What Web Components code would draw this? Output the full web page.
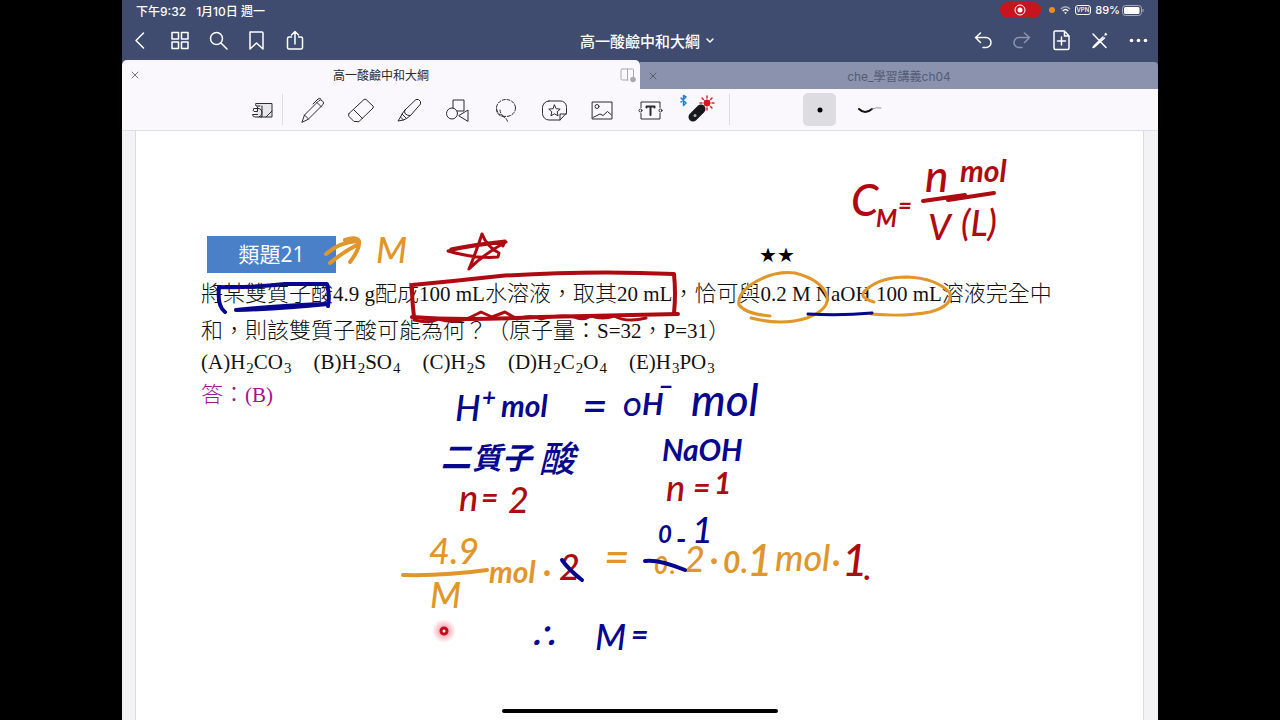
<!DOCTYPE html>
<html lang="zh-Hant">
<head>
<meta charset="utf-8">
<title>高一酸鹼中和大綱</title>
<style>
html, body { margin: 0; min-height: 100%; background: #000; }
body { font-family: Inter, "Noto Sans CJK TC", sans-serif; font-size: 12px; color: #222; }
</style>
</head>
<body>
<note-app>
  <status-bar slot="top"></status-bar>
  <nav-bar slot="top">高一酸鹼中和大綱</nav-bar>
  <tab-strip slot="top">
    <doc-tab active>高一酸鹼中和大綱</doc-tab>
    <doc-tab>che_學習講義ch04</doc-tab>
  </tab-strip>
  <tool-bar slot="top"></tool-bar>
  <note-page></note-page>
</note-app>

<script>
const ICONS = {
  back: '<path d="M13.500 5 6 12.500l7.500 7.500"/>',
  grid: '<path d="M4 4.500h6.500v6.500H4zM13.500 4.500H20v6.500h-6.500zM4 14h6.500v6.500H4zM13.500 14H20v6.500h-6.500z"/>',
  search: '<circle cx="10.500" cy="10.500" r="6"/><path d="m15 15 6 6"/>',
  bookmark: '<path d="M6 4h12a1 1 0 0 1 1 1v16l-6.500-6L6 21z"/>',
  share: '<path d="M9.500 9H7a1.500 1.500 0 0 0-1.500 1.500v9A1.500 1.500 0 0 0 7 21h12a1.500 1.500 0 0 0 1.500-1.500v-9A1.500 1.500 0 0 0 19 9h-2.500M13 16V3.500M9.500 7 13 3.500 16.500 7"/>',
  undo: '<path d="M10.500 5 5.500 9.500l5 5M5.500 9.500H16a4.500 4.500 0 0 1 0 10h-3"/>',
  redo: '<path d="m15.500 5 5 4.500-5 5M20.500 9.500H10a4.500 4.500 0 0 0 0 10h3"/>',
  addPage: '<path d="M7 3h9.500L21 8v12a1.500 1.500 0 0 1-1.500 1.500h-12A1.500 1.500 0 0 1 6 20V4.500A1.500 1.500 0 0 1 7 3zM16.500 3v5H21M13.500 9v8M9.500 13h8"/>',
  penOff: '<path d="m6 6 13 13.500M19 6l-1 1M16 9l-8.500 8.500L6 19.500l2-1L17.500 10M18.500 5.500l1 1"/>',
  more: '<g fill="currentColor" stroke="none"><circle cx="5.500" cy="12.500" r="1.800"/><circle cx="12.500" cy="12.500" r="1.800"/><circle cx="19.500" cy="12.500" r="1.800"/></g>',
  zoomBox: '<path fill="#e8e7eb" stroke="none" d="M7 7h16v14H7z"/><path d="M7 7.500h16v13.500H12M13 10v11H6q-2.500-.5-2.500-2.500h5M5 12.500h5q3 .5 3 4.250-.5 3.500-3 4.250M5 12.500q-2 2 0 3h3.500v-4.500M17 21l6-6M7 7.500q-1 1 0 2.500h4"/>',
  pen: '<path d="M3 26 5.500 19 20 4.500q1.500-1.500 3.500.5t.5 3.500L9.500 23zM5.500 19l4 4M18 6.500l4.500 4.500M14 8l5-5q2-1.500 3 0"/>',
  eraser: '<path d="m2 17.500 15-14q1-.8 2 0l7 6.500q.8.900 0 2L12 25.500q-1 .8-2 0H7l-5-5q-1-1.500 0-3zM7 14l8.500 8.500"/>',
  marker: '<path d="M10 14 21 3.500h2.500l2 2V8L15.500 19.500q-3 .5-5.500-2-1-1.500 0-3.500zM10 14l-3 4 4.500 4.500 4-3M7 18l-1.500 3 3 3 3-1.500M5.500 21 3 25l5.500-1"/>',
  shapes: '<path d="M10 12V4h11v11h-7"/><circle cx="9" cy="17.500" r="5.500"/><path d="m16 19.500 9-5.500v11z"/>',
  lasso: '<g stroke-dasharray="3 1.800"><ellipse cx="14" cy="12" rx="9.500" ry="8.500"/><path d="M4.500 13q0 6 6 7.500 4 1 5 5M8 14q0 3 3 6"/></g>',
  sticker: '<path d="M9 5h11a6 6 0 0 1 6.500 6.500V17L20 24H9a6.500 6.500 0 0 1-6.500-6.500v-6A6.500 6.500 0 0 1 9 5zM20 24v-6h6.500"/><path d="m14.500 9 1.700 3.700 4 .4-3 2.700.9 4-3.600-2-3.600 2 .9-4-3-2.700 4-.4z"/>',
  image: '<path d="M4.500 6h19.500v17H4.500z"/><circle cx="9" cy="10.500" r="2"/><path d="m5 21.500 7-3.500 3 1.500 4.500-4 4 3.500"/>',
  textBox: '<path d="M5 11.500V6h19v5.500M24 17.500V23H5v-5.500"/><circle cx="4.500" cy="14.500" r="1.500"/><circle cx="24.500" cy="14.500" r="1.500"/><path stroke-width="2" d="M10.500 11.500v-1h8v1M14.500 10.500v8.500"/>',
  laser: '<path stroke="#2183cf" stroke-width="1.500" d="m-4 2 5 5-2.500 2.500v-10L1 1l-5 5"/><g stroke="#e02030" stroke-width="1.500"><path d="M22 0v14M15 7h14M17 2l10 10M27 2 17 12" stroke-dasharray="2 2"/></g><circle cx="22" cy="7" r="3.200" fill="#d91424" stroke="none"/><path d="M8 21 16 13" stroke="#17181c" stroke-width="9"/><circle cx="10" cy="19.500" r="1.500" fill="#aaa" stroke="none"/>',
  dot: '<circle cx="14" cy="14" r="2.500" fill="#000" stroke="none"/>',
  curve: '<path d="M4 13q6 6 13 0" stroke-width="2" stroke="#111"/><path d="M17 13q4-2 9-1" stroke="#999"/>',
  split: '<path d="M4 3h10.500a1 1 0 0 1 1 1v7M10 14H4.500a1.500 1.500 0 0 1-1.500-1.500v-8A1.500 1.500 0 0 1 4 3M9.500 3v11"/><circle cx="15" cy="13.500" r="2.800" fill="currentColor" stroke="none"/>',
  close: '<path d="m6 6 6 6M12 6l-6 6"/>',
  chevron: '<path d="m6 8 3 3 3-3"/>'
};

function define(name, render) {
  customElements.define(name, class extends HTMLElement {
    connectedCallback() {
      if (this.shadowRoot) return;
      this.attachShadow({ mode: 'open' }).innerHTML = render(this);
    }
  });
}

/* Square icon button: name, size (viewBox and box), label */
define('icon-button', el => {
  const s = el.getAttribute('size') || '25';
  return `<style>
    :host { display: block; flex: none; }
    button { display: grid; place-items: center; width: 100%; height: 100%; padding: 0; border: 0;
      border-radius: 5px; background: none; color: inherit; }
    svg { display: block; overflow: visible; fill: none; stroke: currentColor;
      stroke-width: var(--line, 1.5); stroke-linejoin: round; stroke-linecap: round; }
    :host([selected]) button { background: #dddce0; }
  </style>
  <button type="button" aria-label="${el.getAttribute('label')}">
    <svg width="${s}" height="${s}" viewBox="0 0 ${s} ${s}">${ICONS[el.getAttribute('name')]}</svg>
  </button>`;
});

define('note-app', () => `<style>
  :host { display: block; background: #000; padding: 0 122px; }
  main { display: flex; flex-direction: column; min-height: 100vh; background: #3f4c70; }
  ::slotted(note-page) { flex: 1; }
</style>
<main><slot name="top"></slot><slot></slot></main>`);

define('status-bar', () => `<style>
  :host { display: flex; justify-content: space-between; align-items: center; height: 20px;
    padding: 0 14px; color: #fff; font-weight: 500; }
  div { display: flex; align-items: center; }
  .when { gap: 10px; }
  .rec { width: 41px; height: 16px; border-radius: 8px; background: #c8141f; justify-content: center; }
  .live { width: 6px; height: 6px; margin: 0 5px 0 8px; border-radius: 50%; background: #ee8e18; }
  .vpn { margin: 0 4px; padding: 0 1px; border: 1px solid #fff; border-radius: 3px; font-size: 6px; line-height: 8px; }
  .pct { margin-right: 2px; font-size: 11px; }
  svg { display: block; }
</style>
<div class="when"><span>下午9:32</span><span>1月10日 週一</span></div>
<div>
  <div class="rec"><svg width="12" height="12" viewBox="0 0 12 12"><circle cx="6" cy="6" r="5" fill="none" stroke="#fff"/><circle cx="6" cy="6" r="2.500" fill="#fff"/></svg></div>
  <i class="live"></i>
  <svg width="11" height="10" viewBox="0 0 12 10" fill="none" stroke="#fff" stroke-width="1.600"><path stroke="#aab0c4" d="M1 4q5-5 10 0"/><path d="M3 6q3-3 6 0"/><path d="M6 9.500 4.500 7.500h3z" fill="#fff" stroke="none"/></svg>
  <span class="vpn">VPN</span><span class="pct">89%</span>
  <svg width="22" height="11" viewBox="0 0 22 11"><rect x=".5" y=".5" width="19" height="10" rx="3" fill="none" stroke="#a5abc0"/><rect x="2" y="2" width="15.500" height="7" rx="1.500" fill="#fff"/><path d="M21 4v3" stroke="#a5abc0"/></svg>
</div>`);

define('nav-bar', () => `<style>
  :host { display: grid; grid-template-columns: 1fr auto 1fr; height: 40px; color: #fff; }
  nav { display: flex; align-items: center; padding-left: 1px; }
  nav icon-button { width: 38px; height: 40px; }
  nav:last-child { justify-content: flex-end; padding: 0; }
  nav:last-child icon-button { width: 39px; }
  h1 { display: flex; align-items: center; margin: 0; padding-left: 20px; font-size: 15px; font-weight: 500; }
  h1 icon-button { width: 20px; height: 20px; }
  .off { color: #8b93ad; }
</style>
<nav>
  <icon-button name="back" label="返回"></icon-button>
  <icon-button name="grid" label="縮圖"></icon-button>
  <icon-button name="search" label="搜尋"></icon-button>
  <icon-button name="bookmark" label="書籤"></icon-button>
  <icon-button name="share" label="分享"></icon-button>
</nav>
<h1><slot></slot><icon-button name="chevron" size="18" label="文件選項"></icon-button></h1>
<nav>
  <icon-button name="undo" label="復原"></icon-button>
  <icon-button class="off" name="redo" label="重做"></icon-button>
  <icon-button name="addPage" label="新增頁面"></icon-button>
  <icon-button name="penOff" label="唯讀模式"></icon-button>
  <icon-button name="more" label="更多"></icon-button>
</nav>`);

define('tab-strip', () => `<style>
  :host { display: flex; align-items: flex-end; height: 29px; }
  ::slotted(doc-tab) { flex: 1; }
</style><slot></slot>`);

define('doc-tab', el => `<style>
  :host { display: grid; grid-template-columns: 26px 1fr 26px; align-items: center; height: 27px;
    background: #8b92ae; color: #555c74; border-radius: 0 4px 0 0; --line: 1; }
  :host([active]) { height: 29px; background: #faf8fc; color: #2a2a2d; border-radius: 5px 5px 0 0; }
  span { text-align: center; }
  icon-button { width: 26px; height: 26px; }
  :host([active]) icon-button { color: #77767b; }
  :host([active]) .split { color: #aaa9ae; }
</style>
<icon-button name="close" size="18" label="關閉分頁"></icon-button><span><slot></slot></span>
${el.hasAttribute('active') ? '<icon-button class="split" name="split" size="18" label="分割畫面"></icon-button>' : ''}`);

define('tool-bar', () => `<style>
  :host { display: flex; align-items: center; height: 41px; padding-left: 124px; background: #faf8fc;
    border-bottom: 1px solid #dedde1; color: #2b2b2e; --line: 1; }
  icon-button { width: 33px; height: 33px; }
  .tools { display: flex; justify-content: space-between; width: 419px; margin: 0 14px 0 13px; }
  .sep { width: 1px; height: 31px; background: #dddce0; }
  .first { margin-left: 3px; }
  .styles { display: flex; gap: 16px; margin-left: 73px; }
</style>
<icon-button name="zoomBox" size="28" label="縮放視窗"></icon-button>
<div class="sep first"></div>
<div class="tools">
  <icon-button name="pen" size="28" label="筆"></icon-button>
  <icon-button name="eraser" size="28" label="橡皮擦"></icon-button>
  <icon-button name="marker" size="28" label="螢光筆"></icon-button>
  <icon-button name="shapes" size="28" label="圖形"></icon-button>
  <icon-button name="lasso" size="28" label="套索"></icon-button>
  <icon-button name="sticker" size="28" label="貼圖"></icon-button>
  <icon-button name="image" size="28" label="圖片"></icon-button>
  <icon-button name="textBox" size="28" label="文字"></icon-button>
  <icon-button name="laser" size="28" label="雷射筆"></icon-button>
</div>
<div class="sep"></div>
<div class="styles">
  <icon-button selected name="dot" size="28" label="點"></icon-button>
  <icon-button name="curve" size="28" label="軌跡"></icon-button>
</div>`);

define('note-page', () => `<style>
  :host { display: flex; position: relative; padding: 0 14px 0 13px; background: #f3f2f5; }
  article { position: relative; flex: 1; box-sizing: border-box; padding: 105px 0 0 65px; border: solid #dcdbe0; border-width: 0 1px;
    background: #fff; color: #111; font: 300 22px/30px "Noto Sans CJK TC", sans-serif; }
  header { display: flex; align-items: center; gap: 423px; padding-left: 6px; }
  h2 { box-sizing: border-box; width: 129px; margin: 0; background: #4a80c8; color: #fff; text-align: center;
    font: 400 21px/37px "Open Sans", "Noto Sans CJK TC", sans-serif; }
  .level { font: 20px/20px "DejaVu Sans", sans-serif; color: #000; }
  p { margin: 0; white-space: nowrap; }
  .stem { line-height: 37px; }
  b { font: 400 21px/20px "Liberation Serif", serif; }
  ul { display: flex; gap: 22px; margin: 0; padding: 0; list-style: none; white-space: nowrap; font: 21px/30px "Liberation Serif", serif; }
  sub { padding-left: 1px; font-size: 15px; line-height: 0; vertical-align: -4px; }
  .answer { color: #a0148c; }
  .home { position: absolute; left: 0; right: 0; bottom: 7px; width: 276px; height: 4px; margin: auto;
    border-radius: 2px; background: #000; }
</style>
<article>
  <header><h2>類題21</h2><span class="level">★★</span></header>
  <p class="stem">將某雙質子酸<b>4.9 g</b>配成<b>100 mL</b>水溶液，取其<b>20 mL</b>，恰可與<b>0.2 M NaOH 100 mL</b>溶液完全中<br>和，則該雙質子酸可能為何？（原子量：<b>S=32</b>，<b>P=31</b>）</p>
  <ul>
    <li>(A)H<sub>2</sub>CO<sub>3</sub></li><li>(B)H<sub>2</sub>SO<sub>4</sub></li><li>(C)H<sub>2</sub>S</li>
    <li>(D)H<sub>2</sub>C<sub>2</sub>O<sub>4</sub></li><li>(E)H<sub>3</sub>PO<sub>3</sub></li>
  </ul>
  <p class="answer">答：<b>(B)</b></p>
  <ink-layer></ink-layer>
</article>
<div class="home"></div>`);

/* Handwritten annotations on the free canvas. Each note is [ink, size, x, baseline, text]. */
const NOTES = [
  ['red', 44, 851, 216, 'C'], ['red', 24, 876, 227, 'M'], ['red', 24, 898, 214, '='],
  ['red', 44, 925, 192, 'n'], ['red', 30, 960, 182, 'mol'], ['red', 36, 928, 240, 'V'], ['red', 36, 961, 236, '(L)'],
  ['gold', 36, 376, 263, 'M'],
  ['blue', 36, 455, 421, 'H'], ['blue', 24, 482, 406, '+'], ['blue', 30, 501, 417, 'mol'],
  ['blue', 44, 582, 422, '='], ['blue', 24, 623, 416, 'O'], ['blue', 30, 642, 415, 'H'], ['blue', 24, 659, 395, '−'],
  ['blue', 44, 691, 416, 'mol'],
  ['blue', 30, 441, 468, '二'], ['blue', 30, 472, 469, '質子'], ['blue', 36, 539, 472, '酸'],
  ['blue', 30, 662, 461, 'NaOH'],
  ['red', 36, 459, 511, 'n'], ['red', 30, 481, 508, '='], ['red', 36, 508, 513, '2'],
  ['red', 36, 666, 501, 'n'], ['red', 30, 693, 498, '='], ['red', 30, 714, 494, '1'],
  ['gold', 36, 429, 564, '4.9'], ['gold', 36, 430, 608, 'M'], ['gold', 30, 489, 583, 'mol'], ['gold', 30, 543, 582, '·'],
  ['red', 36, 559, 580, '2'], ['gold', 44, 604, 573, '='],
  ['gold', 24, 654, 574, '0'], ['gold', 24, 670, 574, '.'], ['gold', 36, 684, 572, '2'], ['gold', 30, 710, 570, '·'],
  ['gold', 30, 723, 573, '0'], ['gold', 30, 741, 573, '.'], ['gold', 44, 747, 576, '1'],
  ['gold', 36, 775, 571, 'mol'], ['gold', 30, 832, 572, '·'],
  ['red', 44, 842, 576, '1'], ['red', 30, 864, 580, '.'],
  ['blue', 24, 658, 543, '0'], ['blue', 30, 676, 550, '-'], ['blue', 36, 692, 543, '1'],
  ['blue', 30, 528, 647, '∴'], ['blue', 36, 595, 650, 'M'], ['blue', 30, 631, 645, '=']
];

define('ink-layer', () => `<style>
  :host { position: absolute; left: 0; top: 0; pointer-events: none; }
  svg { display: block; fill: none; stroke-width: 4; stroke-linecap: round; stroke-linejoin: round; }
  text { font-family: Lato, "Noto Sans CJK TC", sans-serif; font-style: italic; font-weight: 500; white-space: pre; }
  text.small { font-weight: 700; }
  .red { stroke: #ae0a12; } .gold { stroke: #e0962a; } .blue { stroke: #06068e; }
  text.red { fill: #ae0a12; stroke: none; } text.gold { fill: #e0962a; stroke: none; } text.blue { fill: #06068e; stroke: none; }
  .thick { stroke-width: 5; }
  .thin { stroke-width: 3; }
</style>
<svg width="1008" height="580" viewBox="136 131 1008 580">
  <defs><radialGradient id="glow"><stop offset=".3" stop-color="#f0506a" stop-opacity=".5"/><stop offset="1" stop-color="#f0506a" stop-opacity="0"/></radialGradient></defs>
  <g class="gold">
    <path d="M326 254Q340 242 357 241M330 263Q343 252 357 245M345 240Q356 236 359 241Q360 249 350 262"/>
    <path class="thin" d="M770 316Q746 314 739 305Q737 296 749 286Q772 270 795 273Q822 280 827 296Q830 309 807 318Q782 326 751 318"/>
    <path class="thin" d="M874 302Q856 297 867 289Q881 277 907 277Q936 278 950 293Q953 306 930 312Q905 317 871 314"/>
    <path d="M403 575Q445 576 487 570"/>
  </g>
  <g class="red">
    <path class="thin" d="M482 234Q475 255 469 269Q485 253 506 242Q475 245 448 251Q475 259 498 257L499 253Q487 247 482 234M451 249Q475 244 505 241L503 246"/>
    <path d="M412 287Q412 302 414 317M412 285Q455 281 500 276Q590 270 674 274Q676 294 674 313"/>
    <path d="M412 317Q460 321 540 317Q600 316 678 314"/>
    <path class="thin" d="M414 320Q430 324 438 319Q455 324 469 318L481 312L492 317L505 312L517 319Q531 314 541 319Q560 314 574 317Q583 321 591 316Q603 320 614 316Q627 323 646 318"/>
    <path d="M923 201L965 195M948 200L994 193"/>
  </g>
  <g class="blue">
    <path d="M225 312Q217 306 219 287Q250 288 285 284Q310 284 327 284Q330 296 328 306"/>
    <path d="M236 310Q280 309 328 304Q285 305 236 310"/>
    <path class="thin" d="M808 314Q840 316 872 313"/>
  </g>
  ${NOTES.map(([ink, size, x, y, t]) => `<text class="${ink}${size < 36 ? ' small' : ''}" font-size="${size}" x="${x}" y="${y}">${t}</text>`).join('')}
  <path class="blue" d="M562 560Q569 570 582 580M645 561Q658 559 685 570"/>
  <circle cx="444" cy="631" r="12" fill="url(#glow)"/>
  <circle cx="444" cy="631" r="3" fill="#fff" stroke="#c40c1c" stroke-width="3"/>
</svg>`);
</script>
</body>
</html>
